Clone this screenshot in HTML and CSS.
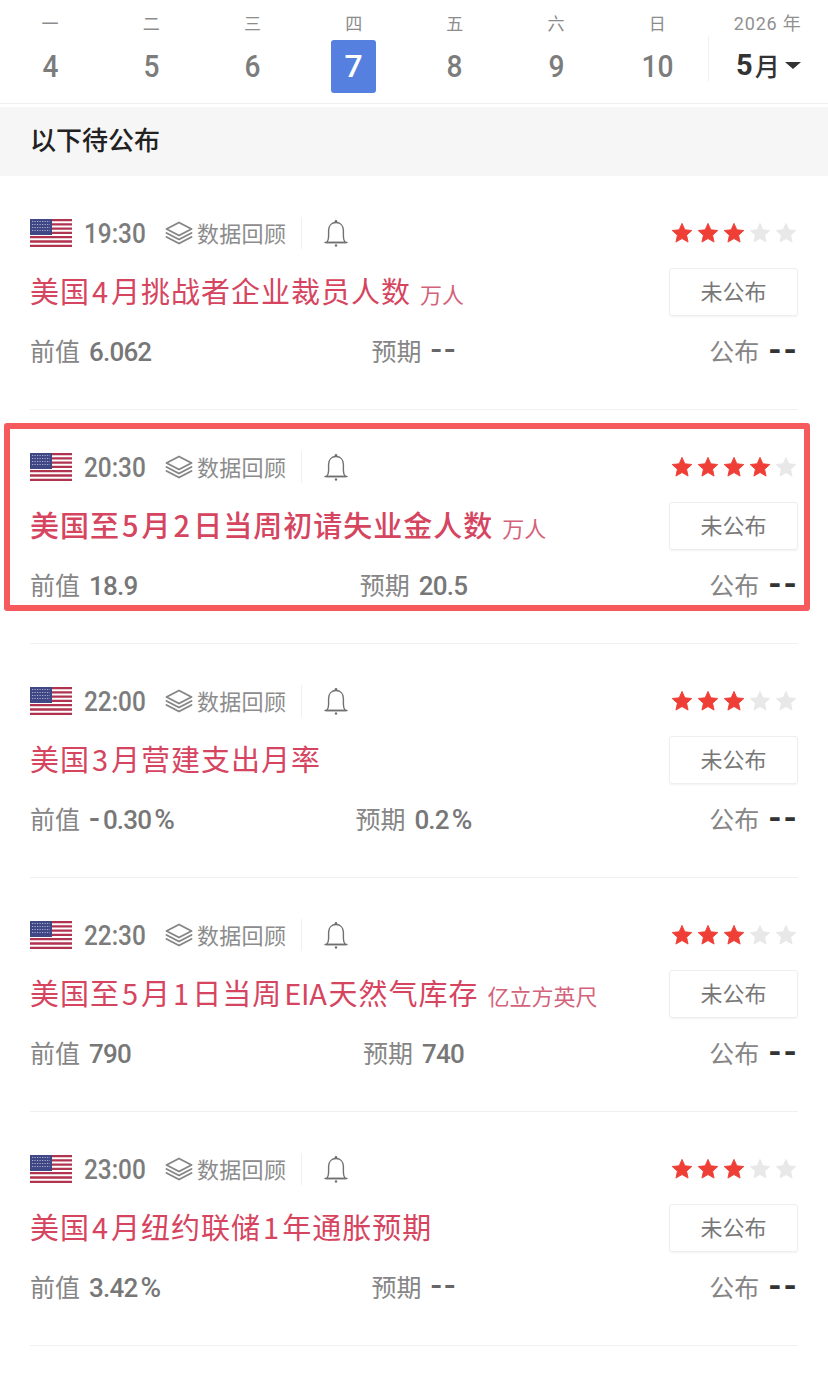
FILE: index.html
```html
<!DOCTYPE html>
<html lang="zh-CN">
<head>
  <meta charset="UTF-8">
  <title>财经日历</title>
  <link rel="stylesheet" href="styles.css">
</head>
<body>

<svg class="defs" width="0" height="0">
  <defs>
    <symbol id="flag" viewBox="0 0 42 28">
      <rect width="42" height="28" fill="#fff"/>
      <path d="M0 1h42M0 5.300h42M0 9.600h42M0 13.900h42M0 18.200h42M0 22.500h42M0 26.800h42" stroke="#b03450" stroke-width="2.300"/>
      <rect width="22" height="16" fill="#3f4785"/>
      <path d="M2 2.500h18M2 5.500h18M2 8.500h18M2 11.500h18" stroke="#a9aed2" stroke-width="1.100" stroke-dasharray="1.200 1.300"/>
    </symbol>
    <symbol id="layers" viewBox="0 0 28 24">
      <path d="M14 1.500 26.500 8 14 14.500 1.500 8Z" fill="none" stroke="currentColor" stroke-width="1.900" stroke-linejoin="round"/>
      <path d="M1.500 12 14 18.500 26.500 12M1.500 16 14 22.500 26.500 16" fill="none" stroke="currentColor" stroke-width="1.900" stroke-linecap="round" stroke-linejoin="round"/>
    </symbol>
    <symbol id="bell" viewBox="0 0 24 28">
      <path d="M2.500 23.500c1.400-1.200 2.100-3 2.100-6v-6C4.600 6.500 7.800 3.500 12 3.500s7.400 3 7.400 8v6c0 3 .7 4.800 2.100 6Z" fill="none" stroke="currentColor" stroke-width="1.400" stroke-linejoin="round"/>
      <path d="M1 23.500h22" stroke="currentColor" stroke-width="1.400" stroke-linecap="round"/>
      <circle cx="12" cy="2.300" r="1.300" fill="currentColor"/>
      <circle cx="12" cy="26.500" r="1.200" fill="currentColor"/>
    </symbol>
    <symbol id="star" viewBox="0 0 24 24">
      <path d="M12 1.500 15.100 8.500 22.700 9.300 17 14.400 18.600 21.900 12 18 5.400 21.900 7 14.400 1.300 9.300 8.900 8.500Z" fill="currentColor" stroke="currentColor" stroke-width="1" stroke-linejoin="round"/>
    </symbol>
  </defs>
</svg>

<header class="calendar">
  <div class="day"><span class="weekday">一</span><span class="date">4</span></div>
  <div class="day"><span class="weekday">二</span><span class="date">5</span></div>
  <div class="day"><span class="weekday">三</span><span class="date">6</span></div>
  <div class="day active"><span class="weekday">四</span><span class="date">7</span></div>
  <div class="day"><span class="weekday">五</span><span class="date">8</span></div>
  <div class="day"><span class="weekday">六</span><span class="date">9</span></div>
  <div class="day"><span class="weekday">日</span><span class="date">10</span></div>
  <div class="month">
    <span class="year">2026 年</span>
    <span class="month-pick"><b>5</b>月<i class="caret"></i></span>
  </div>
</header>

<div class="band">以下待公布</div>

<main id="list"></main>

<script>
  const events = [
    { time: "19:30", title: "美国 4 月挑战者企业裁员人数", unit: "万人", stars: 3, prev: "6.062", exp: "--" },
    { time: "20:30", title: "美国至 5 月 2 日当周初请失业金人数", unit: "万人", stars: 4, prev: "18.9", exp: "20.5", hot: true },
    { time: "22:00", title: "美国 3 月营建支出月率", unit: "", stars: 3, prev: "-0.30%", exp: "0.2%" },
    { time: "22:30", title: "美国至 5 月 1 日当周 <span class=\"abbr\">EIA</span> 天然气库存", unit: "亿立方英尺", stars: 3, prev: "790", exp: "740" },
    { time: "23:00", title: "美国 4 月纽约联储 1 年通胀预期", unit: "", stars: 3, prev: "3.42%", exp: "--" }
  ];

  // the % and minus sign are wider than the digits
  function fmt(v) {
    return v.replace('%', '<span class="pct">%</span>').replace(/^-(?=\d)/, '<span class="minus">-</span>');
  }

  const list = document.getElementById('list');
  events.forEach(e => {
    let stars = '';
    for (let i = 0; i < 5; i++) {
      stars += `<svg class="star ${i < e.stars ? 'on' : ''}"><use href="#star"/></svg>`;
    }
    const row = document.createElement('section');
    row.className = e.hot ? 'event hot' : 'event';
    row.innerHTML = `
      <div class="top">
        <svg class="flag"><use href="#flag"/></svg>
        <span class="time">${e.time}</span>
        <svg class="layers"><use href="#layers"/></svg>
        <span class="review">数据回顾</span>
        <svg class="bell"><use href="#bell"/></svg>
        <span class="stars">${stars}</span>
      </div>
      <div class="mid">
        <h2>${e.title}<small>${e.unit}</small></h2>
        <span class="status">未公布</span>
      </div>
      <div class="vals">
        <span>前值<b>${fmt(e.prev)}</b></span>
        <span class="exp">预期<b class="${e.exp === '--' ? 'dash' : ''}">${fmt(e.exp)}</b></span>
        <span class="pub">公布<b class="dash dark">--</b></span>
      </div>
    `;
    list.appendChild(row);
  });
</script>

</body>
</html>
```

FILE: styles.css
```css
body {
  margin: 0;
  background: #fff;
  font-family: "Noto Sans CJK SC", "Noto Sans", sans-serif;
  color: #808080;
}
.defs {
  position: absolute;
}
b {
  font-family: Roboto, sans-serif;
  font-weight: 500;
}

.calendar {
  display: flex;
  height: 103px;
  border-bottom: 1px solid #f0f0f0;
}
.day {
  width: 101.200px;
  display: flex;
  flex-direction: column;
  align-items: center;
  flex: none;
}
.day:first-child {
  margin-left: -.5px;
}
.weekday {
  font-size: 17px;
  line-height: 20px;
  margin-top: 13px;
  color: #8c8c8c;
}
.date {
  width: 45px;
  height: 53px;
  margin-top: 7px;
  border-radius: 3px;
  text-align: center;
  font-family: Roboto, sans-serif;
  font-weight: 500;
  font-size: 32px;
  line-height: 53px;
  color: #7c7c7c;
  transform: scaleX(.88);
}
.active .date {
  background: #5680e0;
  color: #fff;
  transform: none;
}
.month {
  flex: 1;
  margin: 36px 0 22px 0;
  border-left: 1px solid #f0f0f0;
  position: relative;
  text-align: center;
}
.year {
  position: absolute;
  top: -24px;
  left: 25px;
  font-size: 18px;
  letter-spacing: .8px;
  line-height: 24px;
  white-space: nowrap;
  font-family: Roboto, "Noto Sans CJK SC", sans-serif;
  color: #909090;
}
.month-pick {
  display: flex;
  align-items: center;
  justify-content: center;
  margin-top: 12px;
  font-size: 25px;
  line-height: 34px;
  font-weight: 500;
  color: #333;
}
.month-pick b {
  font-size: 29px;
  font-weight: 700;
  margin-right: 2px;
}
.caret {
  border: 8px solid transparent;
  border-top: 7px solid #333;
  border-bottom: 0;
  margin-left: 5px;
}

.band {
  margin-top: 3px;
  height: 69px;
  padding-left: 30px;
  background: #f6f6f6;
  color: #222;
  font-size: 26px;
  font-weight: 500;
  line-height: 64px;
}

.event {
  position: relative;
  height: 233px;
  margin: 0 30px;
  border-bottom: 1px solid #f0f0f0;
}
.hot::after {
  content: "";
  position: absolute;
  left: -26px;
  right: -12px;
  top: 13px;
  height: 176px;
  border: 6px solid #f65a5c;
  border-radius: 3px;
  pointer-events: none;
}
.top {
  display: flex;
  align-items: center;
  height: 32px;
  padding-top: 41px;
}
.flag {
  width: 42px;
  height: 28px;
  flex: none;
}
.time {
  margin-left: 12px;
  width: 81px;
  font-family: Roboto, sans-serif;
  font-weight: 500;
  font-size: 28px;
  color: #7c7c7c;
  transform: scaleX(.87);
  transform-origin: left center;
}
.layers {
  width: 28px;
  height: 24px;
  color: #858585;
}
.review {
  margin-left: 4px;
  font-size: 22px;
  letter-spacing: .3px;
  color: #8c8c8c;
  padding-right: 15px;
  border-right: 1px solid #f0f0f0;
  line-height: 30px;
  height: 32px;
}
.bell {
  width: 24px;
  height: 28px;
  margin-left: 22px;
  color: #707070;
}
.stars {
  margin-left: auto;
  margin-right: 1px;
  display: flex;
  gap: 4px;
}
.star {
  width: 22px;
  height: 22px;
  color: #e8e8e8;
}
.star.on {
  color: #ef3e36;
}
.mid {
  display: flex;
  align-items: center;
  justify-content: space-between;
  margin-top: 19px;
  height: 48px;
}
h2 {
  margin: -4px 0 0;
  font-size: 29px;
  letter-spacing: 1px;
  word-spacing: -5.500px;
  font-weight: 400;
  color: #d6455f;
  white-space: nowrap;
}
h2 small {
  font-size: 22px;
  font-weight: 400;
  letter-spacing: 0;
  margin-left: 9px;
  color: #d4627a;
}
.abbr {
  letter-spacing: -.3px;
}
.hot h2 {
  font-weight: 500;
}
.status {
  width: 127px;
  height: 46px;
  border: 1px solid #eeeeee;
  border-radius: 3px;
  box-shadow: 0 1px 2px #f2f2f2;
  text-align: center;
  font-size: 22px;
  line-height: 42px;
  color: #777;
}
.vals {
  display: grid;
  grid-template-columns: 1fr auto 1fr;
  margin-top: 10px;
  padding-right: 1px;
  font-size: 25px;
  line-height: 48px;
  color: #868686;
}
.vals span {
  white-space: nowrap;
}
.vals b {
  margin-left: 9px;
  font-size: 26px;
  letter-spacing: -.8px;
  color: #777;
}
.vals .dash {
  font-size: 34px;
  letter-spacing: 2px;
  line-height: 30px;
  margin-right: -2px;
  color: #666;
}
.vals .dark {
  color: #333;
  font-weight: 700;
}
.pct {
  font-size: 28px;
  margin-left: 3px;
}
.minus {
  font-size: 32px;
  letter-spacing: 3px;
  line-height: 30px;
}
.pub {
  text-align: right;
}
```
